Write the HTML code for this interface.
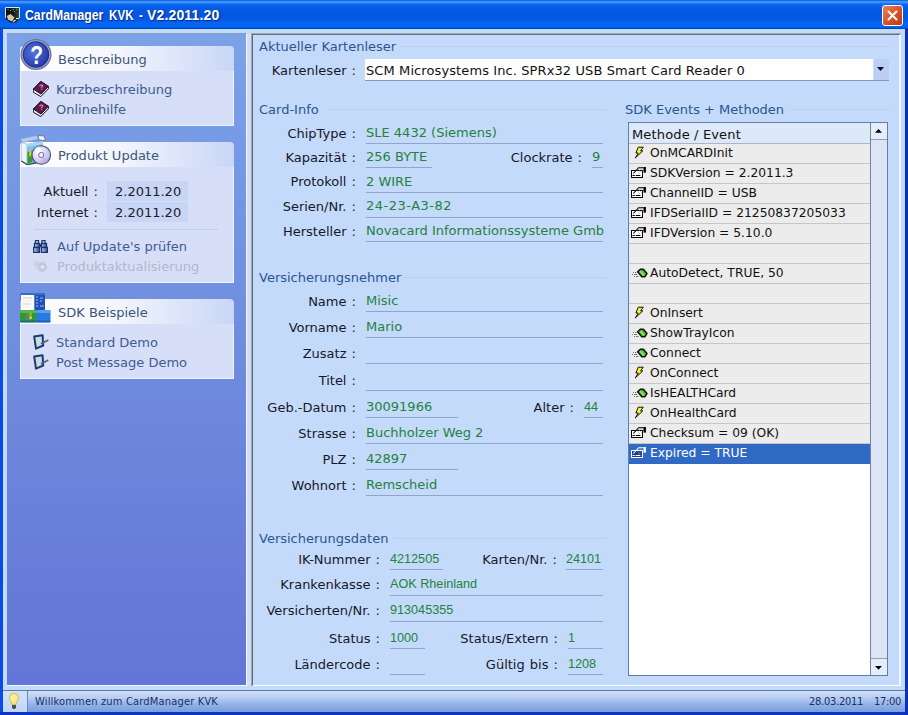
<!DOCTYPE html><html><head><meta charset="utf-8"><title>CardManager KVK</title><style>
*{box-sizing:border-box;margin:0;padding:0}
html,body{width:908px;height:715px;overflow:hidden;background:#0c48e2}
body{position:relative;font-family:'DejaVu Sans','Liberation Sans',sans-serif;font-size:13px;color:#1a1a1a}
.abs{position:absolute}
.t{position:absolute;white-space:nowrap;line-height:16px;height:16px}
.lbl{text-align:right;color:#16182a;word-spacing:1px}
.val{color:#24823c}
.sec{color:#2a5592}
.ul{position:absolute;height:1px;background:#8fa6ca}
.ar{font-family:'Liberation Sans',sans-serif;font-size:13.6px;transform:scaleX(.93);transform-origin:0 0}
.row{position:absolute;left:0;width:241px;height:20px;background:#ececec;border-bottom:1px solid #c6c6c6}
.row span{position:absolute;left:21px;top:1px;line-height:16px;white-space:nowrap;font-size:12.3px;color:#111}
</style></head><body>
<div class="abs" style="left:0;top:0;width:908px;height:715px;background:linear-gradient(90deg,#0c4ae6 0,#0c4ae6 50%,#0a34c0 100%)"></div>
<div class="abs" style="left:0;top:712px;width:908px;height:3px;background:#0a36c4"></div>
<div class="abs" style="left:905px;top:29px;width:3px;height:686px;background:#0a30b8"></div>
<div class="abs" style="left:0;top:0;width:908px;height:29px;background:linear-gradient(#0056cc 0,#3a94ff 1.500px,#3a8efa 2.500px,#0c66ee 4.500px,#045ce6 8px,#0456e0 14px,#0458e4 19px,#0466f4 23px,#0466f2 27px,#0046b8 28.500px,#003ea4 29px)"></div>
<div class="t" style="left:25px;font:bold 14px 'Liberation Sans',sans-serif;color:#fff;line-height:18px;height:18px;top:6px;transform-origin:0 0;text-shadow:1px 1px 1px #0a2a80;transform:scaleX(.876)">CardManager</div>
<div class="t" style="left:109px;font:bold 14px 'Liberation Sans',sans-serif;color:#fff;line-height:18px;height:18px;top:6px;transform-origin:0 0;text-shadow:1px 1px 1px #0a2a80;transform:scaleX(.83)">KVK</div>
<div class="t" style="left:139px;font:bold 14px 'Liberation Sans',sans-serif;color:#fff;line-height:18px;height:18px;top:6px;transform-origin:0 0;text-shadow:1px 1px 1px #0a2a80;transform:scaleX(.8)">-</div>
<div class="t" style="left:147px;font:bold 14px 'Liberation Sans',sans-serif;color:#fff;line-height:18px;height:18px;top:6px;transform-origin:0 0;text-shadow:1px 1px 1px #0a2a80;letter-spacing:.15px">V2.2011.20</div>
<svg class="abs" style="left:5px;top:7px" width="16" height="16" viewBox="0 0 16 16"><defs><linearGradient id="ai" x1="0" x2="1"><stop offset="0" stop-color="#0c1014"/><stop offset=".55" stop-color="#141c16"/><stop offset="1" stop-color="#34502a"/></linearGradient></defs><path d="M.5 .5h14v11.500l-3 3.500h-6.500l-4.500-4z" fill="url(#ai)"/><path d="M.5 11V.5h14V11" fill="none" stroke="#cfe4fa" stroke-width="1"/><path d="M2.500 2.500h1M5 3.500h1M7.500 2.500h1.500M9 4.500h1M11 2.500h1" stroke="#7f8fb0" stroke-width="1"/><path d="M1.800 9L5.500 7l4 3.500-2.500 4-4-1.800z" fill="#d8c4b4"/><path d="M8 14.500l2.500-1.200" stroke="#fff" stroke-width="1.200"/><path d="M11 11.500h3" stroke="#e8eef8" stroke-width="1"/></svg>
<div class="abs" style="left:882px;top:5px;width:21px;height:21px;border:1px solid #fff;border-radius:3px;background:linear-gradient(135deg,#e8855f 0%,#d9532b 50%,#b8391a 100%)"><svg width="19" height="19" viewBox="0 0 19 19" style="position:absolute;left:0;top:0"><path d="M5.500 5.500l8 8M13.500 5.500l-8 8" stroke="#fff8f0" stroke-width="2.100" stroke-linecap="round"/></svg></div>
<div class="abs" style="left:3px;top:29px;width:902px;height:683px;background:#c1dbfb"></div>
<div class="abs" style="left:247px;top:33px;width:4px;height:653px;background:#d3ddf4"></div>
<div class="abs" style="left:7px;top:33px;width:240px;height:653px;background:linear-gradient(#7ba2e7,#6375d6);border-top:1px solid #8a9cc4;border-right:1px solid #f4f8ff;border-bottom:1px solid #f4f8ff"></div>
<div class="abs" style="left:20px;top:46px;width:214px;height:25px;border-radius:4px 4px 0 0;background:linear-gradient(90deg,#ffffff 0%,#f4f6fd 45%,#c9d6f6 100%)"></div>
<div class="abs" style="left:20px;top:71px;width:214px;height:55px;background:#d6dff7;border:1px solid #eef3fd;border-top:none"></div>
<div class="t " style="left:58px;top:52px;color:#3d5578">Beschreibung</div>
<div class="abs" style="left:20px;top:142px;width:214px;height:25px;border-radius:4px 4px 0 0;background:linear-gradient(90deg,#ffffff 0%,#f4f6fd 45%,#c9d6f6 100%)"></div>
<div class="abs" style="left:20px;top:167px;width:214px;height:116px;background:#d6dff7;border:1px solid #eef3fd;border-top:none"></div>
<div class="t " style="left:58px;top:148px;color:#3d5578">Produkt Update</div>
<div class="abs" style="left:20px;top:299px;width:214px;height:25px;border-radius:4px 4px 0 0;background:linear-gradient(90deg,#ffffff 0%,#f4f6fd 45%,#c9d6f6 100%)"></div>
<div class="abs" style="left:20px;top:324px;width:214px;height:55px;background:#d6dff7;border:1px solid #eef3fd;border-top:none"></div>
<div class="t " style="left:58px;top:305px;color:#3d5578">SDK Beispiele</div>
<div class="t " style="left:56px;top:82px;color:#3f5b94">Kurzbeschreibung</div>
<div class="t " style="left:56px;top:102px;color:#3f5b94">Onlinehilfe</div>
<div class="t " style="left:57px;top:239px;color:#3f5b94">Auf Update's prüfen</div>
<div class="t " style="left:57px;top:259px;color:#b2b7ca">Produktaktualisierung</div>
<div class="t " style="left:56px;top:335px;color:#3f5b94">Standard Demo</div>
<div class="t " style="left:56px;top:355px;color:#3f5b94">Post Message Demo</div>
<div class="t lbl" style="left:20px;width:78px;top:184px">Aktuell :</div>
<div class="abs" style="left:107px;top:181px;width:81px;height:20px;background:#c9d5f4"></div>
<div class="t " style="left:115px;top:184px;color:#1c1c2c">2.2011.20</div>
<div class="t lbl" style="left:20px;width:78px;top:205px">Internet :</div>
<div class="abs" style="left:107px;top:202px;width:81px;height:20px;background:#c9d5f4"></div>
<div class="t " style="left:115px;top:205px;color:#1c1c2c">2.2011.20</div>
<div class="abs" style="left:34px;top:229px;width:184px;height:1px;background:#c3cdee"></div>
<svg class="abs" style="left:19px;top:38px" width="34" height="34" viewBox="0 0 34 34"><defs><radialGradient id="qg" cx="0.4" cy="0.4" r="0.7"><stop offset="0" stop-color="#5674da"/><stop offset="0.7" stop-color="#3048b8"/><stop offset="1" stop-color="#22328f"/></radialGradient></defs><circle cx="17" cy="16.500" r="15.500" fill="#6d739f"/><circle cx="17" cy="16.500" r="14.200" fill="#a3abd2"/><circle cx="17" cy="16.500" r="13.200" fill="#1f2e88"/><circle cx="17" cy="16.500" r="12.200" fill="url(#qg)"/><text x="0" y="26.500" text-anchor="middle" font-family="Liberation Sans,sans-serif" font-weight="bold" font-size="25" fill="#fff" transform="translate(17.600 0) scale(.84 1)">?</text></svg>
<svg class="abs" style="left:33px;top:81px" width="16" height="16" viewBox="0 0 16 16"><path d="M.3 8.100L.3 11.200 7.800 15.600 15.400 7.800 15.400 5.300z" fill="#f4eef2" stroke="#1a0a20" stroke-width="1" stroke-linejoin="round"/><path d="M7.800 .3L15.400 5.300 8.100 13.100 .3 8.100z" fill="#5c1a52" stroke="#1a0a20" stroke-width="1" stroke-linejoin="round"/><text x="8.300" y="8.800" font-size="7.500" font-weight="bold" fill="#f0a090" text-anchor="middle" font-family="Liberation Sans,sans-serif" transform="rotate(-8 8 6)">?</text></svg>
<svg class="abs" style="left:33px;top:101px" width="16" height="16" viewBox="0 0 16 16"><path d="M.3 8.100L.3 11.200 7.800 15.600 15.400 7.800 15.400 5.300z" fill="#f4eef2" stroke="#1a0a20" stroke-width="1" stroke-linejoin="round"/><path d="M7.800 .3L15.400 5.300 8.100 13.100 .3 8.100z" fill="#5c1a52" stroke="#1a0a20" stroke-width="1" stroke-linejoin="round"/><text x="8.300" y="8.800" font-size="7.500" font-weight="bold" fill="#f0a090" text-anchor="middle" font-family="Liberation Sans,sans-serif" transform="rotate(-8 8 6)">?</text></svg>
<svg class="abs" style="left:19px;top:134px" width="34" height="34" viewBox="0 0 34 34"><defs><radialGradient id="cdg" cx="0.35" cy="0.35" r="0.8"><stop offset="0" stop-color="#ffffff"/><stop offset="0.6" stop-color="#cfcaf2"/><stop offset="1" stop-color="#a9a0e0"/></radialGradient></defs><path d="M1.500 5l16-3.500 2 3.500-16 3.500z" fill="#b4ccf2" stroke="#8aa0cc" stroke-width=".6"/><path d="M19 1.500l6 .5 1.500 4.500-6.500-.5z" fill="#f4f7fd" stroke="#56607a" stroke-width=".7"/><path d="M2 8.500l6 1.500v20.500L2.500 27z" fill="#eef2fa" stroke="#9aa8c8" stroke-width=".6"/><path d="M8 10L24 7v21L8 30.500z" fill="#7cc0f2"/><path d="M8 10L24 7v3L8 13z" fill="#a8d4f6"/><path d="M8.500 18l5-1.500v11.500l-5 1.500z" fill="#2fa030"/><path d="M10.300 16.500l2-.5v6l-2 .5z" fill="#e6c840"/><path d="M2.300 27l5.700 3.600 9-1.600" fill="none" stroke="#3f4658" stroke-width="1.300"/><circle cx="22.300" cy="21" r="9.300" fill="url(#cdg)" stroke="#4a4e6c" stroke-width="1.100"/><path d="M22.300 21l-7-5.500a9.300 9.300 0 0 1 5-3.500z" fill="#fff" opacity=".7"/><path d="M22.300 21l7 5.500a9.300 9.300 0 0 1-5 3.500z" fill="#b8a8ec" opacity=".5"/><circle cx="22.300" cy="21" r="2.600" fill="#f4f4fc" stroke="#6a6a98" stroke-width="1"/></svg>
<svg class="abs" style="left:33px;top:240px" width="15" height="13" viewBox="0 0 15 13"><defs><linearGradient id="bg1" x1="0" x2="1"><stop offset="0" stop-color="#c4d0ea"/><stop offset="1" stop-color="#2c478a"/></linearGradient></defs><rect x="2.500" y=".5" width="3" height="3" fill="#e8eefa" stroke="#1a3270" stroke-width="1.300"/><rect x="9" y=".5" width="3" height="3" fill="#e8eefa" stroke="#1a3270" stroke-width="1.300"/><rect x="1.500" y="3.500" width="5" height="4" fill="url(#bg1)" stroke="#1a3270" stroke-width="1.300"/><rect x="8.500" y="3.500" width="5" height="4" fill="url(#bg1)" stroke="#1a3270" stroke-width="1.300"/><rect x=".5" y="7.500" width="6" height="5" fill="url(#bg1)" stroke="#1a3270" stroke-width="1.300"/><rect x="8.500" y="7.500" width="6" height="5" fill="url(#bg1)" stroke="#1a3270" stroke-width="1.300"/><rect x="6.500" y="4" width="2" height="3" fill="#1f3a78"/></svg>
<svg class="abs" style="left:32px;top:259px" width="16" height="14" viewBox="0 0 16 14"><circle cx="10" cy="8" r="5" fill="#c2c8dc"/><circle cx="10.500" cy="8" r="2" fill="#dfe4f4"/><circle cx="4" cy="4.500" r="2.800" fill="#ccd2e6"/><circle cx="5" cy="9" r="2" fill="#d0d6ea"/></svg>
<svg class="abs" style="left:20px;top:292px" width="32" height="31" viewBox="0 0 32 31"><rect x=".5" y="1" width="24.500" height="18" fill="#2f6fd4"/><rect x="1" y="3" width="13.500" height="15" fill="#fbfcff"/><rect x="14.500" y="3" width="10.500" height="15.500" fill="#2350b8"/><path d="M3 6h9M3 12h8" stroke="#f0c890" stroke-width="1.200"/><path d="M3 9h9M3 15h7" stroke="#e4e8f2" stroke-width="1"/><path d="M16 5h2M16 8h2M16 11h2M16 14h2M20 6h3M20 9h2M20 14h4" stroke="#8fc0f4" stroke-width="1.200"/><rect x="0" y="18" width="16.500" height="12.500" rx="1.500" fill="#2f9a32"/><rect x="0" y="18" width="16.500" height="3" rx="1.500" fill="#52b850"/><rect x="16" y="18" width="14.500" height="12.500" rx="1.500" fill="#2b7ae0"/><rect x="16" y="18" width="14.500" height="3" rx="1.500" fill="#58a0f0"/><rect x="0" y="28.500" width="30.500" height="2" fill="#1a4a9a" opacity=".55"/><path d="M6 22l2.500-.8v3l-2.500.8z" fill="#e05030"/><path d="M9.300 21l2.500-.8v3l-2.500.8z" fill="#70c840"/><path d="M6 25.800l2.500-.8v2.800l-2.500.8z" fill="#4080e0"/><path d="M9.300 24.800l2.500-.8v2.800l-2.500.8z" fill="#f0d040"/></svg>
<svg class="abs" style="left:33px;top:334px" width="16" height="16" viewBox="0 0 16 16"><path d="M1.200 2.600L9.600 1.200l.6 10.300L3 14.600z" fill="#c4dcf6" stroke="#1f3a6a" stroke-width="2" stroke-linejoin="round"/><path d="M4.300 5.200l2.400-.5-.4 4.600-1.500.6z" fill="#e6dc9a"/><path d="M8.600 9.300L11.500 8" stroke="#3f66b4" stroke-width="1.900" stroke-linecap="round"/><path d="M11.500 8l3.200-1.600" stroke="#66667a" stroke-width="1.800" stroke-linecap="round"/></svg>
<svg class="abs" style="left:33px;top:354px" width="16" height="16" viewBox="0 0 16 16"><path d="M1.200 2.600L9.600 1.200l.6 10.300L3 14.600z" fill="#c4dcf6" stroke="#1f3a6a" stroke-width="2" stroke-linejoin="round"/><path d="M4.300 5.200l2.400-.5-.4 4.600-1.500.6z" fill="#e6dc9a"/><path d="M8.600 9.300L11.500 8" stroke="#3f66b4" stroke-width="1.900" stroke-linecap="round"/><path d="M11.500 8l3.200-1.600" stroke="#66667a" stroke-width="1.800" stroke-linecap="round"/></svg>
<div class="abs" style="left:251px;top:33px;width:650px;height:653px;background:#9aa5b6"></div>
<div class="abs" style="left:252px;top:34px;width:649px;height:652px;background:#c4dafa;border:1px solid #fff;border-right:2px solid #f2f7ff;border-left:1px solid #5f6a78;border-top:1px solid #66707e"></div>
<div class="t sec" style="left:259px;top:39px;">Aktueller Kartenleser</div>
<div class="abs" style="left:400px;top:46px;width:490px;height:1px;background:#bfcfe8"></div>
<div class="t sec" style="left:259px;top:102px;">Card-Info</div>
<div class="abs" style="left:327px;top:109px;width:280px;height:1px;background:#bfcfe8"></div>
<div class="t sec" style="left:259px;top:270px;">Versicherungsnehmer</div>
<div class="abs" style="left:404px;top:277px;width:203px;height:1px;background:#bfcfe8"></div>
<div class="t sec" style="left:259px;top:531px;">Versicherungsdaten</div>
<div class="abs" style="left:393px;top:538px;width:214px;height:1px;background:#bfcfe8"></div>
<div class="t sec" style="left:625px;top:102px;">SDK Events + Methoden</div>
<div class="abs" style="left:790px;top:109px;width:100px;height:1px;background:#bfcfe8"></div>
<div class="t lbl" style="left:196px;width:160px;top:63px">Kartenleser :</div>
<div class="abs" style="left:365px;top:59px;width:524px;height:21px;background:#fff"></div>
<div class="abs" style="left:873px;top:59px;width:16px;height:21px;background:#bccef4;border-left:1px solid #cfdcf8"></div>
<div class="abs" style="left:365px;top:80px;width:524px;height:1px;background:#7f98bc"></div>
<svg class="abs" style="left:877px;top:67px" width="7" height="4"><path d="M0 0h7l-3.500 4z" fill="#0a0a28"/></svg>
<div class="t " style="left:366px;top:63px;color:#111;letter-spacing:.1px">SCM Microsystems Inc. SPRx32 USB Smart Card Reader 0</div>
<div class="t lbl" style="left:196px;width:160px;top:126px">ChipType :</div>
<div class="t val" style="left:366px;top:125px;">SLE 4432 (Siemens)</div>
<div class="ul" style="left:366px;top:143px;width:237px"></div>
<div class="t lbl" style="left:196px;width:160px;top:150px">Kapazität :</div>
<div class="t val" style="left:366px;top:149px;">256 BYTE</div>
<div class="ul" style="left:366px;top:167px;width:66px"></div>
<div class="t lbl" style="left:196px;width:160px;top:174px">Protokoll :</div>
<div class="t val" style="left:366px;top:174px;">2 WIRE</div>
<div class="ul" style="left:366px;top:192px;width:237px"></div>
<div class="t lbl" style="left:196px;width:160px;top:199px">Serien/Nr. :</div>
<div class="t val" style="left:366px;top:198px;letter-spacing:.5px">24-23-A3-82</div>
<div class="ul" style="left:366px;top:217px;width:237px"></div>
<div class="t lbl" style="left:196px;width:160px;top:224px">Hersteller :</div>
<div class="t val" style="left:366px;top:223px;">Novacard Informationssysteme Gmb</div>
<div class="ul" style="left:366px;top:241px;width:237px"></div>
<div class="t lbl" style="left:422px;width:160px;top:150px">Clockrate :</div>
<div class="t val" style="left:592px;top:149px;">9</div>
<div class="ul" style="left:592px;top:167px;width:11px"></div>
<div class="t lbl" style="left:196px;width:160px;top:294px">Name :</div>
<div class="t val" style="left:366px;top:293px;">Misic</div>
<div class="ul" style="left:366px;top:311px;width:237px"></div>
<div class="t lbl" style="left:196px;width:160px;top:320px">Vorname :</div>
<div class="t val" style="left:366px;top:319px;">Mario</div>
<div class="ul" style="left:366px;top:337px;width:237px"></div>
<div class="t lbl" style="left:196px;width:160px;top:346px">Zusatz :</div>
<div class="ul" style="left:366px;top:363px;width:237px"></div>
<div class="t lbl" style="left:196px;width:160px;top:373px">Titel :</div>
<div class="ul" style="left:366px;top:390px;width:237px"></div>
<div class="t lbl" style="left:196px;width:160px;top:400px">Geb.-Datum :</div>
<div class="t val" style="left:366px;top:399px;">30091966</div>
<div class="ul" style="left:366px;top:417px;width:92px"></div>
<div class="t lbl" style="left:196px;width:160px;top:426px">Strasse :</div>
<div class="t val" style="left:366px;top:425px;">Buchholzer Weg 2</div>
<div class="ul" style="left:366px;top:443px;width:237px"></div>
<div class="t lbl" style="left:196px;width:160px;top:452px">PLZ :</div>
<div class="t val" style="left:366px;top:451px;">42897</div>
<div class="ul" style="left:366px;top:469px;width:92px"></div>
<div class="t lbl" style="left:196px;width:160px;top:478px">Wohnort :</div>
<div class="t val" style="left:366px;top:477px;">Remscheid</div>
<div class="ul" style="left:366px;top:495px;width:237px"></div>
<div class="t lbl" style="left:414px;width:160px;top:400px">Alter :</div>
<div class="t val ar" style="left:584px;top:399px;">44</div>
<div class="ul" style="left:584px;top:417px;width:19px"></div>
<div class="t lbl" style="left:220px;width:160px;top:552px">IK-Nummer :</div>
<div class="t val ar" style="left:390px;top:551px;">4212505</div>
<div class="ul" style="left:390px;top:569px;width:53px"></div>
<div class="t lbl" style="left:220px;width:160px;top:577px">Krankenkasse :</div>
<div class="t val ar" style="left:390px;top:576px;">AOK Rheinland</div>
<div class="ul" style="left:390px;top:595px;width:213px"></div>
<div class="t lbl" style="left:220px;width:160px;top:603px">Versicherten/Nr. :</div>
<div class="t val ar" style="left:390px;top:602px;">913045355</div>
<div class="ul" style="left:390px;top:621px;width:213px"></div>
<div class="t lbl" style="left:220px;width:160px;top:631px">Status :</div>
<div class="t val ar" style="left:390px;top:630px;">1000</div>
<div class="ul" style="left:390px;top:648px;width:35px"></div>
<div class="t lbl" style="left:220px;width:160px;top:657px">Ländercode :</div>
<div class="ul" style="left:390px;top:674px;width:35px"></div>
<div class="t lbl" style="left:397px;width:160px;top:552px">Karten/Nr. :</div>
<div class="t val ar" style="left:566px;top:551px;">24101</div>
<div class="ul" style="left:566px;top:569px;width:37px"></div>
<div class="t lbl" style="left:398px;width:160px;top:631px">Status/Extern :</div>
<div class="t val ar" style="left:568px;top:630px;">1</div>
<div class="ul" style="left:568px;top:648px;width:35px"></div>
<div class="t lbl" style="left:398px;width:160px;top:657px">Gültig bis :</div>
<div class="t val ar" style="left:568px;top:656px;">1208</div>
<div class="ul" style="left:568px;top:674px;width:35px"></div>
<div class="abs" style="left:628px;top:122px;width:260px;height:554px;background:#fff;border:1px solid #5f7fa8">
<div class="abs" style="left:0;top:0;width:241px;height:21px;background:#dde8f8;border-bottom:1px solid #a9b6c9"><span style="position:absolute;left:3px;top:4px;line-height:16px;color:#111;letter-spacing:.15px">Methode / Event</span></div>
<div class="row" style="top:21px"><svg style="position:absolute;left:5px;top:2px" width="12" height="14" viewBox="0 0 12 14"><path d="M4.200 1.200H9.300L6.600 4.900H8.800L1.200 12 4.300 7H1.900z" fill="#f4f23c" stroke="#111" stroke-width="1" stroke-linejoin="miter"/></svg><span>OnMCARDInit</span></div>
<div class="row" style="top:41px"><svg style="position:absolute;left:2px;top:2px" width="16" height="14" viewBox="0 0 16 14"><rect x=".5" y="4.500" width="11" height="7" fill="#fff" stroke="#000" stroke-width="1"/><path d="M1.500 9.500h2.300M4.700 9.500h4.700" stroke="#000" stroke-width="1"/><path d="M2.300 7.500L7.600 1.700h5.200" stroke="#000" stroke-width="1.100" fill="none"/><path d="M7 2.800l4 4.600M5.600 4.200l3.500 4M9 2.200l2.800 3.300" stroke="#7a7a8a" stroke-width=".8" stroke-dasharray="1 .8"/><rect x="12.500" y="1" width="2.400" height="5.600" fill="#000"/></svg><span>SDKVersion = 2.2011.3</span></div>
<div class="row" style="top:61px"><svg style="position:absolute;left:2px;top:2px" width="16" height="14" viewBox="0 0 16 14"><rect x=".5" y="4.500" width="11" height="7" fill="#fff" stroke="#000" stroke-width="1"/><path d="M1.500 9.500h2.300M4.700 9.500h4.700" stroke="#000" stroke-width="1"/><path d="M2.300 7.500L7.600 1.700h5.200" stroke="#000" stroke-width="1.100" fill="none"/><path d="M7 2.800l4 4.600M5.600 4.200l3.500 4M9 2.200l2.800 3.300" stroke="#7a7a8a" stroke-width=".8" stroke-dasharray="1 .8"/><rect x="12.500" y="1" width="2.400" height="5.600" fill="#000"/></svg><span>ChannelID = USB</span></div>
<div class="row" style="top:81px"><svg style="position:absolute;left:2px;top:2px" width="16" height="14" viewBox="0 0 16 14"><rect x=".5" y="4.500" width="11" height="7" fill="#fff" stroke="#000" stroke-width="1"/><path d="M1.500 9.500h2.300M4.700 9.500h4.700" stroke="#000" stroke-width="1"/><path d="M2.300 7.500L7.600 1.700h5.200" stroke="#000" stroke-width="1.100" fill="none"/><path d="M7 2.800l4 4.600M5.600 4.200l3.500 4M9 2.200l2.800 3.300" stroke="#7a7a8a" stroke-width=".8" stroke-dasharray="1 .8"/><rect x="12.500" y="1" width="2.400" height="5.600" fill="#000"/></svg><span>IFDSerialID = 21250837205033</span></div>
<div class="row" style="top:101px"><svg style="position:absolute;left:2px;top:2px" width="16" height="14" viewBox="0 0 16 14"><rect x=".5" y="4.500" width="11" height="7" fill="#fff" stroke="#000" stroke-width="1"/><path d="M1.500 9.500h2.300M4.700 9.500h4.700" stroke="#000" stroke-width="1"/><path d="M2.300 7.500L7.600 1.700h5.200" stroke="#000" stroke-width="1.100" fill="none"/><path d="M7 2.800l4 4.600M5.600 4.200l3.500 4M9 2.200l2.800 3.300" stroke="#7a7a8a" stroke-width=".8" stroke-dasharray="1 .8"/><rect x="12.500" y="1" width="2.400" height="5.600" fill="#000"/></svg><span>IFDVersion = 5.10.0</span></div>
<div class="row" style="top:121px"></div>
<div class="row" style="top:141px"><svg style="position:absolute;left:2px;top:4px" width="18" height="10" viewBox="0 0 18 10"><path d="M2 4.500h1M4 4.500h1.500M1 6.500h1M3 6.500h3M3 8.500h1M5 8.500h2.500" stroke="#777" stroke-width="1"/><path d="M9.300 1.200H12.400L16 5.400 14 8.700H10.800L6.600 3.700z" fill="#58b038" stroke="#0a1a06" stroke-width="1.500" stroke-linejoin="round"/><path d="M9.500 3.200l3.500 4" stroke="#a0e878" stroke-width="1.500"/></svg><span>AutoDetect, TRUE, 50</span></div>
<div class="row" style="top:161px"></div>
<div class="row" style="top:181px"><svg style="position:absolute;left:5px;top:2px" width="12" height="14" viewBox="0 0 12 14"><path d="M4.200 1.200H9.300L6.600 4.900H8.800L1.200 12 4.300 7H1.900z" fill="#f4f23c" stroke="#111" stroke-width="1" stroke-linejoin="miter"/></svg><span>OnInsert</span></div>
<div class="row" style="top:201px"><svg style="position:absolute;left:2px;top:4px" width="18" height="10" viewBox="0 0 18 10"><path d="M2 4.500h1M4 4.500h1.500M1 6.500h1M3 6.500h3M3 8.500h1M5 8.500h2.500" stroke="#777" stroke-width="1"/><path d="M9.300 1.200H12.400L16 5.400 14 8.700H10.800L6.600 3.700z" fill="#58b038" stroke="#0a1a06" stroke-width="1.500" stroke-linejoin="round"/><path d="M9.500 3.200l3.500 4" stroke="#a0e878" stroke-width="1.500"/></svg><span>ShowTrayIcon</span></div>
<div class="row" style="top:221px"><svg style="position:absolute;left:2px;top:4px" width="18" height="10" viewBox="0 0 18 10"><path d="M2 4.500h1M4 4.500h1.500M1 6.500h1M3 6.500h3M3 8.500h1M5 8.500h2.500" stroke="#777" stroke-width="1"/><path d="M9.300 1.200H12.400L16 5.400 14 8.700H10.800L6.600 3.700z" fill="#58b038" stroke="#0a1a06" stroke-width="1.500" stroke-linejoin="round"/><path d="M9.500 3.200l3.500 4" stroke="#a0e878" stroke-width="1.500"/></svg><span>Connect</span></div>
<div class="row" style="top:241px"><svg style="position:absolute;left:5px;top:2px" width="12" height="14" viewBox="0 0 12 14"><path d="M4.200 1.200H9.300L6.600 4.900H8.800L1.200 12 4.300 7H1.900z" fill="#f4f23c" stroke="#111" stroke-width="1" stroke-linejoin="miter"/></svg><span>OnConnect</span></div>
<div class="row" style="top:261px"><svg style="position:absolute;left:2px;top:4px" width="18" height="10" viewBox="0 0 18 10"><path d="M2 4.500h1M4 4.500h1.500M1 6.500h1M3 6.500h3M3 8.500h1M5 8.500h2.500" stroke="#777" stroke-width="1"/><path d="M9.300 1.200H12.400L16 5.400 14 8.700H10.800L6.600 3.700z" fill="#58b038" stroke="#0a1a06" stroke-width="1.500" stroke-linejoin="round"/><path d="M9.500 3.200l3.500 4" stroke="#a0e878" stroke-width="1.500"/></svg><span>IsHEALTHCard</span></div>
<div class="row" style="top:281px"><svg style="position:absolute;left:5px;top:2px" width="12" height="14" viewBox="0 0 12 14"><path d="M4.200 1.200H9.300L6.600 4.900H8.800L1.200 12 4.300 7H1.900z" fill="#f4f23c" stroke="#111" stroke-width="1" stroke-linejoin="miter"/></svg><span>OnHealthCard</span></div>
<div class="row" style="top:301px"><svg style="position:absolute;left:2px;top:2px" width="16" height="14" viewBox="0 0 16 14"><rect x=".5" y="4.500" width="11" height="7" fill="#fff" stroke="#000" stroke-width="1"/><path d="M1.500 9.500h2.300M4.700 9.500h4.700" stroke="#000" stroke-width="1"/><path d="M2.300 7.500L7.600 1.700h5.200" stroke="#000" stroke-width="1.100" fill="none"/><path d="M7 2.800l4 4.600M5.600 4.200l3.500 4M9 2.200l2.800 3.300" stroke="#7a7a8a" stroke-width=".8" stroke-dasharray="1 .8"/><rect x="12.500" y="1" width="2.400" height="5.600" fill="#000"/></svg><span>Checksum = 09 (OK)</span></div>
<div class="row" style="top:321px;background:#316ac5;border-bottom-color:#316ac5"><svg style="position:absolute;left:2px;top:2px" width="16" height="14" viewBox="0 0 16 14"><rect x=".5" y="4.500" width="11" height="7" fill="#1c3f94" stroke="#fff" stroke-width="1"/><path d="M1.500 9.500h2.300M4.700 9.500h4.700" stroke="#fff" stroke-width="1"/><path d="M2.300 7.500L7.600 1.700h5.200" stroke="#fff" stroke-width="1.100" fill="none"/><path d="M7 2.800l4 4.600M5.600 4.200l3.500 4M9 2.200l2.800 3.300" stroke="#b9c6ea" stroke-width=".8" stroke-dasharray="1 .8"/><rect x="12.500" y="1" width="2.400" height="5.600" fill="#fff"/></svg><span style="color:#fff">Expired = TRUE</span></div>
<div class="abs" style="left:241px;top:0;width:1px;height:552px;background:#76859b"></div>
<div class="abs" style="left:242px;top:0;width:16px;height:552px;background:#dbe5f6"></div>
<div class="abs" style="left:242px;top:0;width:16px;height:17px;background:#e6edfa;border-bottom:1px solid #8f9fba"></div>
<div class="abs" style="left:242px;top:535px;width:16px;height:17px;background:#e6edfa;border-top:1px solid #8f9fba"></div>
<svg class="abs" style="left:246px;top:6px" width="7" height="4"><path d="M0 3.800h7l-3.500-3.800z" fill="#000"/></svg>
<svg class="abs" style="left:246px;top:543px" width="7" height="4"><path d="M0 0h7l-3.500 3.800z" fill="#000"/></svg>
</div>
<div class="abs" style="left:3px;top:690px;width:902px;height:22px;background:linear-gradient(#cfe0f9 0%,#b9cff3 30%,#93b1e7 65%,#7d9edc 100%);border-top:1px solid #5f7aa4"></div>
<div class="abs" style="left:3px;top:691px;width:24px;height:21px;background:linear-gradient(#d2e3fb,#c0d6f6)"></div>
<div class="abs" style="left:27px;top:691px;width:1px;height:21px;background:#6f88b4"></div>
<div class="t" style="left:35px;top:694px;font:11px 'DejaVu Sans Condensed','Liberation Sans',sans-serif;line-height:16px;color:#15306a;letter-spacing:.18px">Willkommen zum CardManager KVK</div>
<div class="t" style="left:809px;top:694px;font:11px 'DejaVu Sans Condensed','Liberation Sans',sans-serif;line-height:16px;color:#15306a;letter-spacing:-.26px">28.03.2011</div>
<div class="t" style="left:874px;top:694px;font:11px 'DejaVu Sans Condensed','Liberation Sans',sans-serif;line-height:16px;color:#15306a;letter-spacing:-.3px">17:00</div>
<svg class="abs" style="left:8px;top:692px" width="12" height="18" viewBox="0 0 12 18"><defs><radialGradient id="bl" cx=".45" cy=".4" r=".6"><stop offset="0" stop-color="#fff6a8"/><stop offset="1" stop-color="#f4dc70"/></radialGradient></defs><path d="M6 1.200a4.700 4.700 0 0 1 2.800 8.500l-.6 3h-4.400l-.6-3A4.700 4.700 0 0 1 6 1.200z" fill="url(#bl)" stroke="#c8b868" stroke-width=".9"/><path d="M4 13h4v2.500l-1 1.500h-2l-1-1.500z" fill="#4a4e58"/></svg>
</body></html>
